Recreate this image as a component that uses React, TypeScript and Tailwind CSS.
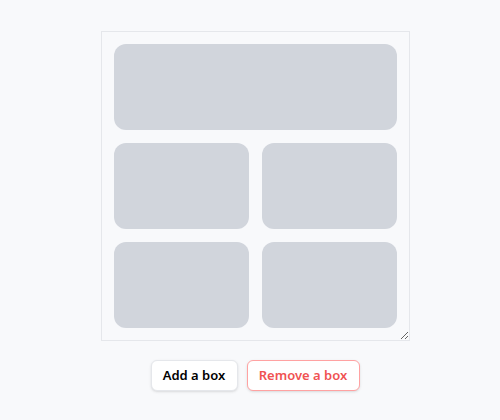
export default function App() {
  return (
    <div
      className="min-h-screen bg-[#f8f9fb] pt-[31px] pl-[10px] flex flex-col items-center"
      style={{ fontFamily: '"Noto Sans", "Noto Sans CJK KR", sans-serif' }}
    >
      <div className="w-[309px] h-[310px] border border-gray-200 p-3 resize overflow-auto">
        <div className="grid grid-cols-2 gap-[13px]">
          <div className="col-span-2 h-[86px] rounded-xl bg-gray-300" />
          <div className="h-[86px] rounded-xl bg-gray-300" />
          <div className="h-[86px] rounded-xl bg-gray-300" />
          <div className="h-[86px] rounded-xl bg-gray-300" />
          <div className="h-[86px] rounded-xl bg-gray-300" />
        </div>
      </div>

      <div className="mt-[19px] flex gap-[9px]">
        <button className="h-[31px] w-[87px] rounded-md border border-gray-200 bg-white text-[13px] font-semibold text-black shadow-sm">
          Add a box
        </button>
        <button className="h-[31px] w-[113px] rounded-md border border-red-300 bg-white text-[13px] font-semibold text-[#f05252] shadow-sm">
          Remove a box
        </button>
      </div>
    </div>
  );
}
